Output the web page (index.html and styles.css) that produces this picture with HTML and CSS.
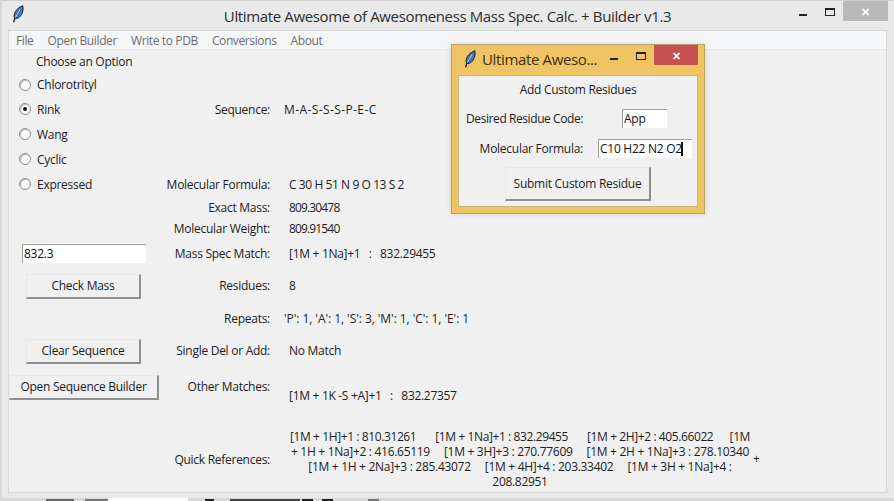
FILE: index.html
```html
<!DOCTYPE html>
<html lang="en">
<head>
<meta charset="utf-8">
<title>Ultimate Awesome of Awesomeness Mass Spec. Calc. + Builder v1.3</title>
<link rel="stylesheet" href="styles.css">
</head>
<body>
<svg class="defs" width="0" height="0" aria-hidden="true">
  <symbol id="feather" viewBox="0 0 12 18">
    <path d="M1.6 17.2 3.3 12" fill="none" stroke="#111" stroke-width="1.3"/>
    <path d="M2.6 13.4C.9 9.6 3.6 3.4 10.8.8c1 4.200-.6 10.200-5.200 12.500z" fill="#3f74b5" stroke="#10233f" stroke-width="1"/>
    <path d="M3.300 12.500 8.300 4.200" stroke="#cfe0f2" stroke-width=".8" fill="none"/>
  </symbol>
</svg>

<div class="win">
  <header class="titlebar">
    <svg class="feather"><use href="#feather"/></svg>
    <h1 class="title">Ultimate Awesome of Awesomeness Mass Spec. Calc. + Builder v1.3</h1>
    <div class="controls">
      <span class="ctl"><i class="min"></i></span>
      <span class="ctl"><i class="max"></i></span>
      <span class="close gray">✕</span>
    </div>
  </header>
  <div class="client">
    <nav class="menu">
      <span>File</span><span>Open Builder</span><span>Write to PDB</span><span>Conversions</span><span>About</span>
    </nav>
    <main class="grid">
      <div class="cell choose">Choose an Option</div><div></div><div></div>

      <label class="cell radio"><i class="dot"></i>Chlorotrityl</label><div></div><div></div>

      <label class="cell radio"><i class="dot on"></i>Rink</label>
      <div class="cell lab">Sequence:</div><div class="cell val seq">M-A-S-S-S-P-E-C</div>

      <label class="cell radio"><i class="dot"></i>Wang</label><div></div><div></div>
      <label class="cell radio"><i class="dot"></i>Cyclic</label><div></div><div></div>

      <label class="cell radio"><i class="dot"></i>Expressed</label>
      <div class="cell lab">Molecular Formula:</div><div class="cell val formula-val">C 30 H 51 N 9 O 13 S 2</div>

      <div></div><div class="cell lab">Exact Mass:</div><div class="cell val num">809.30478</div>
      <div></div><div class="cell lab">Molecular Weight:</div><div class="cell val num">809.91540</div>

      <div class="cell left"><input class="entry mass" value="832.3"></div>
      <div class="cell lab">Mass Spec Match:</div><div class="cell val match">[1M + 1Na]+1 &nbsp;&nbsp;:&nbsp;&nbsp; 832.29455</div>

      <div class="cell left"><button class="btn side">Check Mass</button></div>
      <div class="cell lab">Residues:</div><div class="cell val">8</div>

      <div></div><div class="cell lab">Repeats:</div><div class="cell val rep">'P': 1, 'A': 1, 'S': 3, 'M': 1, 'C': 1, 'E': 1</div>

      <div class="cell left"><button class="btn side">Clear Sequence</button></div>
      <div class="cell lab">Single Del or Add:</div><div class="cell val">No Match</div>

      <div class="cell left"><button class="btn wide">Open Sequence Builder</button></div>
      <div class="cell lab">Other Matches:</div><div class="cell val other match">[1M + 1K -S +A]+1 &nbsp;&nbsp;:&nbsp;&nbsp; 832.27357</div>

      <div></div><div class="cell lab quick">Quick References:</div>
      <div class="cell val quick">
        <p class="refs"><span class="first">[1M + 1H]+1 : 810.31261 &nbsp;&nbsp;&nbsp;&nbsp;&nbsp; [1M + 1Na]+1 : 832.29455 &nbsp;&nbsp;&nbsp;&nbsp;&nbsp; [1M + 2H]+2 : 405.66022 &nbsp;&nbsp;&nbsp;&nbsp;&nbsp;[1M</span><br>+ 1H + 1Na]+2 : 416.65119 &nbsp;&nbsp;&nbsp; [1M + 3H]+3 : 270.77609 &nbsp;&nbsp;&nbsp; [1M + 2H + 1Na]+3 : 278.10340<br>[1M + 1H + 2Na]+3 : 285.43072 &nbsp;&nbsp;&nbsp; [1M + 4H]+4 : 203.33402 &nbsp;&nbsp;&nbsp; [1M + 3H + 1Na]+4 :<br>208.82951</p>
        <span class="plus">+</span>
      </div>
    </main>
  </div>
</div>

<div class="strip"><b class="a"></b><b class="b"></b><b class="c"></b><b class="d"></b><b class="e"></b><b class="f"></b><b class="g"></b><b class="h"></b></div>

<section class="dialog">
  <header class="dtitle">
    <svg class="feather"><use href="#feather"/></svg>
    <span class="dname">Ultimate Aweso...</span>
    <span class="ctl"><i class="min"></i></span>
    <span class="ctl"><i class="max"></i></span>
    <span class="close red">✕</span>
  </header>
  <div class="dbody">
    <div class="dhead">Add Custom Residues</div>
    <div class="drow"><span class="dlab tight">Desired Residue Code:</span><input class="entry code" value="App"></div>
    <div class="drow"><span class="dlab">Molecular Formula:</span><span class="entry formula">C10 H22 N2 O2<i class="caret"></i></span></div>
    <button class="btn submit">Submit Custom Residue</button>
  </div>
</section>
</body>
</html>
```
FILE: styles.css
```css
* { box-sizing: border-box; }
html, body { margin: 0; height: 100%; overflow: hidden; }
body {
  position: relative;
  background: #d8d8d8;
  font-family: "Open Sans", "Noto Sans", sans-serif;
  font-size: 12px;
  letter-spacing: -.27px;
  color: #1c1c1c;
}
.defs { position: absolute; }
.feather { width: 12px; height: 18px; flex: none; }

/* main window */
.win {
  height: 498px;
  margin-left: 1px;
  padding: 0 7px 5px 6px;
  display: flex;
  flex-direction: column;
  background: #e9e9e9;
  border-top: 1px solid #cfcfcf;
  border-left: 1px solid #d8d8d8;
}
.titlebar { position: relative; height: 29px; flex: none; display: flex; align-items: center; }
.titlebar .feather { margin: -3px 0 0 4px; }
.title {
  position: absolute; left: 0; right: 0; top: 5px; margin: 0;
  text-align: center; font-weight: 400; font-size: 15px; letter-spacing: -.36px; line-height: 20px; color: #2e2e2e;
}
.controls { position: absolute; right: -1px; top: 0; display: flex; align-items: flex-start; }
.ctl { width: 27px; height: 20px; display: flex; align-items: center; justify-content: center; flex: none; }
.min { width: 8px; height: 2px; margin-top: 7px; background: #222; }
.max { width: 10px; height: 8px; margin-top: 2px; border: 1px solid #222; border-top-width: 2px; }
.close {
  width: 45px; height: 20px; color: #fff; font-size: 11px; font-weight: 700; flex: none;
  display: flex; align-items: center; justify-content: center;
}
.gray { background: #b8b8b8; }
.red { background: #c75050; }

.client { flex: 1; min-height: 0; background: #f0f0f0; border: 1px solid #d9d9d9; display: flex; flex-direction: column; }
.menu {
  height: 19px; flex: none; display: flex; gap: 14px; padding-left: 7px; align-items: center;
  background: #f5f6f7; border-bottom: 1px solid #e6e6e6; color: #6d6d6d; letter-spacing: -.38px;
}

.grid {
  display: grid;
  grid-template-columns: 151px 110px 1fr;
  grid-template-rows: 22px 25px 24px 26px 24px 26px 20px 22px 28px 36px 30px 34px 38px 87px;
}
.cell { display: flex; align-items: center; min-width: 0; white-space: nowrap; }
.choose { padding-left: 27px; }
.radio { padding-left: 10px; gap: 6px; }
.dot {
  width: 12px; height: 12px; border-radius: 50%; flex: none;
  background: #fff; border: 1px solid #8c8c8c; box-shadow: inset 1px 1px 1px #bbb;
  display: flex; align-items: center; justify-content: center;
}
.dot.on::after { content: ""; width: 4px; height: 4px; border-radius: 50%; background: #111; }
.lab { justify-content: flex-end; }
.val { padding-left: 19px; }
.val.seq { padding-left: 14px; letter-spacing: .4px; }
.val.rep { padding-left: 14px; letter-spacing: -.06px; }
.val.num { letter-spacing: -.85px; }
.val.formula-val { letter-spacing: -.42px; }
.val.match { letter-spacing: -.3px; }
.val.other { padding-top: 18px; }
.lab.quick { padding-top: 22px; }
.val.quick { gap: 1px; align-items: flex-start; padding-left: 18px; padding-top: 24px; }
.refs { margin: 0; width: 464px; text-align: center; line-height: 15px; white-space: nowrap; letter-spacing: -.3px; }
.first { letter-spacing: -.4px; }
.plus { margin-top: 22px; line-height: 15px; }
.left { padding-left: 13px; }

.entry {
  display: block; font: inherit; letter-spacing: inherit; color: #111; background: #fff; border: 0;
  border-top: 1px solid #a0a0a0; border-left: 1px solid #a0a0a0;
  padding: 0 1px; height: 19px; line-height: 18px; outline: 0;
}
.mass { width: 124px; }
.btn {
  font: inherit; letter-spacing: inherit; color: #1c1c1c; background: #f0f0f0; padding: 0;
  border-top: 1px solid #e8e8e8; border-left: 1px solid #e8e8e8;
  border-right: 2px solid #8f8f8f; border-bottom: 2px solid #8f8f8f;
}
.side { width: 115px; height: 25px; margin: 2px 0 0 4px; }
.wide { width: 150px; height: 25px; margin: 2px 0 0 -13px; }

/* strip of what lies behind the window */
.strip { height: 3px; display: flex; align-items: flex-end; background: #d8d8d8; }
.strip b { height: 2px; display: block; flex: none; background: #222; }
.strip .a { width: 28px; margin-left: 46px; background: #666; }
.strip .b { width: 23px; margin-left: 11px; background: #777; }
.strip .c { width: 80px; height: 3px; background: #fff; }
.strip .d { width: 9px; margin-left: 17px; }
.strip .e { width: 70px; margin-left: 16px; background: #444; }
.strip .f { width: 11px; margin-left: 2px; }
.strip .g { width: 11px; margin-left: 9px; }
.strip .h { width: 11px; margin-left: 35px; background: #777; }

/* dialog */
.dialog {
  position: absolute; left: 451px; top: 44px; width: 254px; height: 170px;
  padding: 0 6px 6px; background: #f0c462; border: 1px solid #b9a06b;
  display: flex; flex-direction: column; box-shadow: 0 0 6px rgba(0,0,0,.12);
}
.dtitle { height: 30px; flex: none; display: flex; align-items: flex-start; }
.dtitle .feather { margin: 5px 6px 0 6px; }
.dname { font-size: 15px; letter-spacing: -.36px; line-height: 28px; width: 118px; flex: none; color: #3a3016; white-space: nowrap; }
.dtitle .close { width: 44px; }
.dbody { flex: 1; min-height: 0; background: #f0f0f0; border: 1px solid #c9b27c; display: flex; flex-direction: column; align-items: center; }
.dhead { height: 27px; line-height: 27px; }
.drow { align-self: stretch; display: grid; grid-template-columns: 124px 1fr; height: 30px; align-items: center; }
.dlab { text-align: right; white-space: nowrap; }
.dlab.tight { letter-spacing: -.42px; }
.code { width: 45px; margin-left: 39px; }
.formula { width: 94px; margin-left: 15px; white-space: nowrap; }
.caret { display: inline-block; width: 2px; height: 14px; background: #111; vertical-align: -3px; margin-left: -1px; }
.submit { width: 146px; height: 34px; margin-top: 4px; }
```
